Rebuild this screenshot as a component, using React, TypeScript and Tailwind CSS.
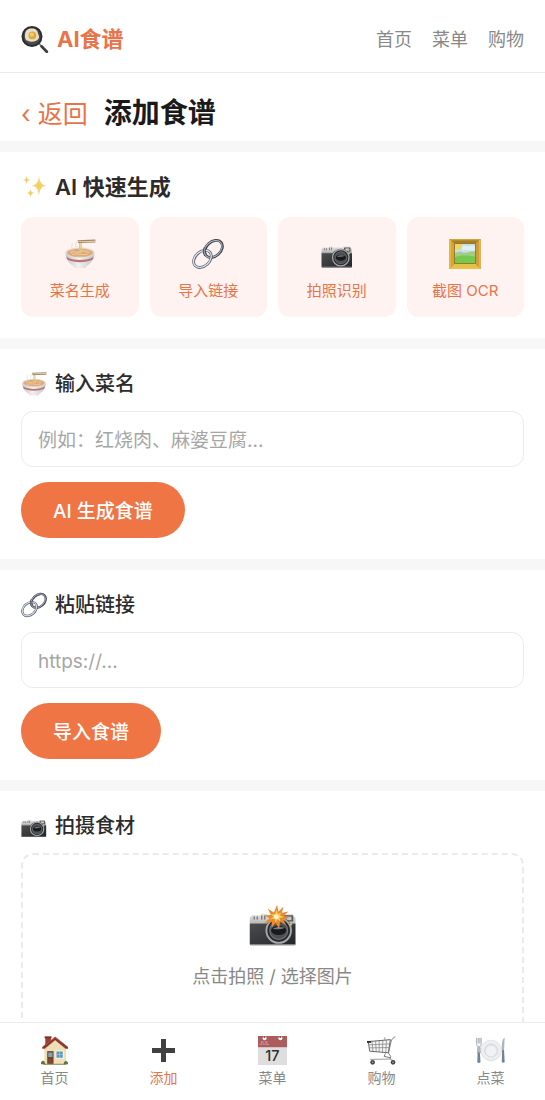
import { useState } from "react";
import type { ReactNode } from "react";

type IconProps = { className?: string };

function PanIcon({ className }: IconProps) {
  return (
    <svg viewBox="0 0 28 28" className={className} aria-hidden="true">
      <path d="M18 18.500l3.200 3.400" stroke="#8a8a8a" strokeWidth="1.800" />
      <path d="M20.600 21.400l5.200 5.400" stroke="#3b3c3f" strokeWidth="2.800" strokeLinecap="round" />
      <circle cx="11" cy="11.500" r="10.500" fill="#2a2c2e" />
      <circle cx="11" cy="11.300" r="8.600" fill="#4a4b4a" />
      <path d="M5.400 5.400c2.200-2.200 7.600-2.600 9.900-.4 1.700 1.500 1.500 3.800 2.500 5.500.9 2-.4 4.400-2.600 5.200-2.600 1-5.600 1.800-8.200 0C3 15.500 3.400 7.600 5.400 5.400z" fill="#e9e0cb" />
      <circle cx="11.400" cy="10.400" r="3.900" fill="#deaa3a" />
      <circle cx="10.800" cy="9.600" r="2.100" fill="#f3cd6a" />
    </svg>
  );
}

function SparklesIcon({ className }: IconProps) {
  return (
    <svg viewBox="0 0 26 26" className={className} aria-hidden="true">
      <defs>
        <radialGradient id="spark">
          <stop offset="0" stopColor="#f3cc50" />
          <stop offset="1" stopColor="#f0e0a8" />
        </radialGradient>
      </defs>
      <g fill="url(#spark)">
        <path d="M18 1.500c.8 6.800 2.200 9 7.500 10-5.300 1-6.700 3.800-7.500 11-.8-7.200-2.200-10-7.500-11 5.300-1 6.700-3.200 7.500-10z" />
        <path d="M5.500 1.500c.4 3 1.200 4 3.800 4.500-2.600.5-3.400 1.600-3.800 4.600-.4-3-1.200-4.100-3.800-4.600 2.600-.5 3.400-1.500 3.800-4.500z" />
        <path d="M9.500 14.500c.4 3 1.300 4.100 4 4.600-2.700.5-3.600 1.700-4 4.700-.4-3-1.300-4.200-4-4.700 2.700-.5 3.600-1.600 4-4.600z" />
      </g>
    </svg>
  );
}

function NoodleIcon({ className }: IconProps) {
  return (
    <svg viewBox="0 0 32 32" className={className} aria-hidden="true">
      <defs>
        <linearGradient id="bowl" x1="0" x2="1">
          <stop offset="0" stopColor="#cbc7c6" />
          <stop offset=".45" stopColor="#f2efed" />
          <stop offset="1" stopColor="#cbc5c5" />
        </linearGradient>
      </defs>
      <path d="M8 10c-1-2 1-3 0-5M12 9c-1-2 1-3 0-5" fill="none" stroke="#e3dfdc" strokeWidth="1" />
      <path d="M1.500 14.500c0 8 5 12 8.500 14v1.500h12v-1.500c3.500-2 8.500-6 8.500-14z" fill="url(#bowl)" />
      <path d="M2.300 18.800c7 4.400 20.400 4.400 27.400 0-.3 1.200-.7 2.100-1.200 3-6.600 3.200-18.400 3.200-25 0-.5-.9-.9-1.800-1.200-3z" fill="#b8757a" />
      <ellipse cx="16" cy="14.500" rx="14.500" ry="5" fill="#dfdad7" />
      <ellipse cx="16" cy="14.800" rx="13" ry="4" fill="#dcaa7c" />
      <path d="M6 14.500c4-3 7 2 10-1s6 1.500 9.500.5M8 16.500c5-2 11 1.500 16-.5" fill="none" stroke="#edca95" strokeWidth="1.100" />
      <path d="M15.500 4c.5 4-.5 6 .8 11M17.200 4v11" fill="none" stroke="#e9c865" strokeWidth="1.200" />
      <path d="M14 2.800L31 2.200M14.500 4.500L31 4" stroke="#a3895c" strokeWidth="1.200" strokeLinecap="round" />
    </svg>
  );
}

function LinkIcon({ className }: IconProps) {
  return (
    <svg viewBox="0 0 32 32" className={className} aria-hidden="true">
      <g fill="none" transform="rotate(-42 16 16)">
        <ellipse cx="23.500" cy="16" rx="10" ry="7.200" stroke="#41454f" strokeWidth="2.800" />
        <ellipse cx="23.200" cy="15.700" rx="10" ry="7.200" stroke="#b5bcc6" strokeWidth="1" />
        <ellipse cx="8.600" cy="16" rx="10" ry="7.200" stroke="#596070" strokeWidth="2.800" />
        <ellipse cx="8.600" cy="15.800" rx="10" ry="7.200" stroke="#dde2e9" strokeWidth="1.300" />
        <path d="M13.500 15.500c0-3 2-5 4.700-6.100" stroke="#41454f" strokeWidth="2.800" />
        <path d="M13.500 15.500c0-3 2-5 4.700-6.100" stroke="#a6adb8" strokeWidth="1" />
      </g>
    </svg>
  );
}

function CameraBody() {
  return (
    <>
      <defs>
        <linearGradient id="cam-top" x2="0" y2="1">
          <stop offset="0" stopColor="#e4e4e2" />
          <stop offset="1" stopColor="#b2b2b0" />
        </linearGradient>
        <linearGradient id="cam-body" x2="1" y2="1">
          <stop offset="0" stopColor="#4b4c4e" />
          <stop offset="1" stopColor="#242527" />
        </linearGradient>
      </defs>
      <path d="M2 1.500h6V.500h4v1h10V.500h7.500v1.500l1.500 1v5H.500V3z" fill="url(#cam-top)" />
      <rect x=".5" y="7" width="30.500" height="14.500" rx=".8" fill="url(#cam-body)" />
      <path d="M.8 7h30M.8 21h30" stroke="#85868a" strokeWidth=".7" />
      <path d="M3.500 2.300v2M5.500 2.300v2M8.500 1.600v2.700M10.500 1.600v2.700" stroke="#777" strokeWidth=".9" />
      <rect x="23" y="1.500" width="6.500" height="4.200" rx=".4" fill="#56585b" />
      <rect x="24.300" y="2.400" width="4" height="2.400" fill="#c6cac8" />
      <circle cx="19.800" cy="11.700" r="9" fill="#3b3c3e" />
      <circle cx="19.800" cy="11.700" r="8.200" fill="#282a2d" stroke="#a4a6a8" strokeWidth="1.300" />
      <circle cx="19.800" cy="11.700" r="6" fill="#4c4f54" stroke="#737679" strokeWidth=".7" />
      <ellipse cx="19.800" cy="11.700" rx="5" ry="3" fill="#17191c" />
      <path d="M15.800 10.500c2-1.300 5.500-1.600 8-.7-2 .9-5 1.500-8 .7z" fill="#777c82" />
      <circle cx="28" cy="7.600" r=".8" fill="#d9c24e" />
    </>
  );
}

function CameraIcon({ className }: IconProps) {
  return (
    <svg viewBox="0 -8 32 32" className={className} aria-hidden="true">
      <CameraBody />
    </svg>
  );
}

function CameraFlashIcon({ className }: IconProps) {
  return (
    <svg viewBox="0 -6 32 28" className={className} aria-hidden="true">
      <CameraBody />
      <path
        d="M18.700-5.500l1 4.700 3.200-3.600-.9 4.200 4.400-.8-3.400 2.800 4.200 1.600-4.400.8 1.900 4-4-2.600-.6 5-2.300-4-2.800 3.300.2-4.100-5.200.9 3.800-3-3.600-2.200 4.400-.2-2-4.200 4 2.500z"
        fill="#e98a2c"
      />
      <path d="M18.500-2.200l.8 3 2.200-1.200-.9 2 2.600 1-2.800.7.6 2.400-2-1.500-1.400 2.300-.4-2.600-3 .3 2.200-1.700-1.600-1.600 2.400.1z" fill="#fbd15b" />
      <circle cx="18.200" cy="2.500" r="1.600" fill="#fff4c9" />
    </svg>
  );
}

function FrameIcon({ className }: IconProps) {
  return (
    <svg viewBox="0 0 32 32" className={className} aria-hidden="true">
      <path d="M.5 1h31v30H.5z" fill="#b78b1e" />
      <path d="M.5 1l5 4.500h21l5-4.500z" fill="#a87d24" />
      <path d="M.5 31l5-5.500h21l5 5.500z" fill="#e6c046" />
      <path d="M.5 1l5 4.500v20L.5 31z" fill="#d5a52f" />
      <path d="M31.500 1l-5 4.500v20l5 5.500z" fill="#cf9f35" />
      <path d="M1.300 1.800h29.400v28.400H1.300z" fill="none" stroke="#e9c653" strokeWidth=".8" />
      <path d="M5.500 5.500h21v20h-21z" fill="#c3dfe8" />
      <path d="M13 8c3-1 5 1 8 0s4 0 5.500.5v4c-4 1-9-1-13.500 0z" fill="#e3eef0" />
      <path d="M5.500 15.500c3-1.500 5-2.500 8-1 4 1.500 8-2.500 13-1v12h-21z" fill="#9fcf85" />
      <path d="M5.500 19.500c6-3 13-2 21-1v7h-21z" fill="#78c850" />
      <path d="M6 6h6.500l.7 2-1 2.200-2.200 1.400L6 11z" fill="#efd657" />
      <path d="M5.500 5.500h21v20h-21z" fill="none" stroke="#8b6a1a" strokeWidth=".8" />
    </svg>
  );
}

function HouseIcon({ className }: IconProps) {
  return (
    <svg viewBox="0 0 84 88" className={className} aria-hidden="true">
      <path d="M14 4h17v26H14z" fill="#9a4038" />
      <path d="M12 1h21v6H12z" fill="#7f322d" />
      <path d="M11 38l33-30 33 30v48H11z" fill="#eedfb8" />
      <path d="M44 14l33 28v-6L44 8 11 36v6z" fill="#c9b184" />
      <path d="M44 2L5 33v6h6l33-27 33 27h6v-6z" fill="#8a332d" />
      <path d="M44 2L5 33v2L44 6l39 29v-2z" fill="#b3594d" />
      <path d="M20 46h19v40H20z" fill="#6c3b26" />
      <path d="M23 50h13v14H23z" fill="#7da3bd" />
      <path d="M23 68h13v14H23z" fill="#81492f" />
      <path d="M45 44h25v25H45z" fill="#faf5e6" />
      <path d="M48 47h19v19H48z" fill="#5e96c2" />
      <path d="M57 47v19M48 56h19" stroke="#c1dbe8" strokeWidth="1.500" />
      <path d="M8 84h70v4H8z" fill="#a69a82" />
      <path d="M1 86c-1-8 3-12 7-11 4 1 6 6 6 11zM70 86c0-7 3-11 7-10 5 1 7 6 6 10z" fill="#5d7a38" />
    </svg>
  );
}

function PlusIcon({ className }: IconProps) {
  return (
    <svg viewBox="0 0 29 29" className={className} aria-hidden="true">
      <path d="M12 3h5v9h9v5h-9v9h-5v-9H3v-5h9z" fill="#414141" />
    </svg>
  );
}

function CalendarIcon({ className }: IconProps) {
  return (
    <svg viewBox="0 0 88 88" className={className} aria-hidden="true">
      <path d="M0 0h88v88H0z" fill="#dedede" />
      <path d="M0 0h88v34H0z" fill="#ad5c5c" />
      <circle cx="20" cy="7" r="6" fill="#fff" />
      <circle cx="68" cy="7" r="6" fill="#fff" />
      <path d="M17 0h5v6h-5zM65 0h5v6h-5z" fill="#8e5050" />
      <text x="4" y="26" fontSize="16" fill="#e2bcbc" fontFamily="Inter, sans-serif">JUL</text>
      <text x="44" y="75" fontSize="44" fontWeight="500" textAnchor="middle" fill="#2f2f2f" fontFamily="Inter, sans-serif">17</text>
    </svg>
  );
}

function CartIcon({ className }: IconProps) {
  return (
    <svg viewBox="0 0 88 88" className={className} aria-hidden="true" fill="none">
      <path d="M4 17l67-6-6 40-57-5z" fill="#f4f4f4" stroke="#666" strokeWidth="3" />
      <path d="M5 27l64-3M6 36l62-1M15 16l3 30M26 15l2 32M37 14v34M48 13l-1 36M59 12l-2 38" stroke="#777" strokeWidth="2" />
      <path d="M86 1L74 12l-9 40 7 10-2 8M56 53l-4 9 20 4" stroke="#777" strokeWidth="3" />
      <path d="M54 4v9M10 71l60-1 12 6" stroke="#999" strokeWidth="3" />
      <path d="M0 15h12v6H0z" fill="#333" />
      <circle cx="17" cy="80" r="7" fill="#444" />
      <circle cx="79" cy="80" r="7" fill="#444" />
      <circle cx="17" cy="80" r="2.500" fill="#aaa" />
      <circle cx="79" cy="80" r="2.500" fill="#aaa" />
    </svg>
  );
}

function PlateIcon({ className }: IconProps) {
  return (
    <svg viewBox="0 0 90 88" className={className} aria-hidden="true">
      <circle cx="47" cy="44" r="33" fill="#dfe1e4" />
      <circle cx="47" cy="43" r="31" fill="#eceef0" />
      <circle cx="47" cy="44" r="20" fill="#e3e5e8" stroke="#cbced2" strokeWidth="2" />
      <circle cx="47" cy="46" r="16" fill="#f1f2f3" />
      <path d="M2 5v18c0 5 2 7 4 8L5 52h8l-1-21c3-1 4-4 4-8V5M7 5v17M12 5v17" fill="none" stroke="#8a98a4" strokeWidth="2.500" />
      <path d="M6 30h6l1 22H5z" fill="#aeb9c2" />
      <path d="M5 50h7l2 30c-2 4-8 4-10 0z" fill="#718496" />
      <path d="M89 4c-7 4-10 18-9 38h7z" fill="#aab6c0" />
      <path d="M81 42h6l2 38c-2 3-7 3-9 0z" fill="#718496" />
    </svg>
  );
}

const topLinks = ["首页", "菜单", "购物"];

const quickActions = [
  { label: "菜名生成", Icon: NoodleIcon },
  { label: "导入链接", Icon: LinkIcon },
  { label: "拍照识别", Icon: CameraIcon },
  { label: "截图 OCR", Icon: FrameIcon },
];

const tabs = [
  { label: "首页", Icon: HouseIcon },
  { label: "添加", Icon: PlusIcon },
  { label: "菜单", Icon: CalendarIcon },
  { label: "购物", Icon: CartIcon },
  { label: "点菜", Icon: PlateIcon },
];

function SectionTitle({ icon, children }: { icon: ReactNode; children: ReactNode }) {
  return (
    <h2 className="flex h-7 items-center gap-2 text-xl leading-7 font-medium text-[#2b2b2b]">
      {icon}
      {children}
    </h2>
  );
}

type FieldSectionProps = {
  id: string;
  title: string;
  icon: ReactNode;
  placeholder: string;
  action: string;
};

function FieldSection({ id, title, icon, placeholder, action }: FieldSectionProps) {
  const [value, setValue] = useState("");

  return (
    <section className="bg-white p-[21px]">
      <SectionTitle icon={icon}>
        <label htmlFor={id}>{title}</label>
      </SectionTitle>
      <input
        id={id}
        type="text"
        value={value}
        onChange={(e) => setValue(e.target.value)}
        placeholder={placeholder}
        className="mt-[13px] block h-14 w-full rounded-xl border border-[#ebebeb] bg-white px-4 pt-0.5 text-[19px] text-[#2b2b2b] outline-none placeholder:text-[#a6a6a6] focus:border-[#ef7545]"
      />
      <button
        type="button"
        className="mt-[15px] block h-14 rounded-full bg-[#ef7545] px-8 pt-1 text-[19px] font-medium text-white"
      >
        {action}
      </button>
    </section>
  );
}

export default function App() {
  return (
    <div
      lang="zh-CN"
      className="flex h-screen flex-col bg-[#f7f7f7] font-['Inter','Noto_Sans_CJK_SC',sans-serif]"
    >
      <header className="flex h-[73px] shrink-0 items-center justify-between border-b border-[#ebebeb] bg-white px-[21px] pt-1.5">
        <a href="#" className="flex items-center gap-2 text-[22px] font-bold text-[#e8744a]">
          <PanIcon className="size-7" />
          AI食谱
        </a>
        <nav className="flex gap-5 pt-0.5 text-lg text-[#888]">
          {topLinks.map((label) => (
            <a key={label} href="#">
              {label}
            </a>
          ))}
        </nav>
      </header>

      <main className="flex min-h-0 flex-1 flex-col gap-[11px] overflow-y-auto [scrollbar-width:none] *:shrink-0">
        <div className="flex h-[68px] items-center bg-white px-[21px] pt-3">
          <div className="flex items-baseline gap-4">
            <a href="#" className="text-[25px] text-[#e8744a]">
              ‹ 返回
            </a>
            <h1 className="text-[28px] font-bold text-[#1a1a1a]">添加食谱</h1>
          </div>
        </div>

        <section className="bg-white p-[21px]">
          <SectionTitle icon={<SparklesIcon className="size-[26px]" />}>
            <span className="text-[22px] font-semibold">AI 快速生成</span>
          </SectionTitle>
          <div className="mt-4 grid grid-cols-4 gap-[11px]">
            {quickActions.map(({ label, Icon }) => (
              <button
                key={label}
                type="button"
                className="flex flex-col items-center gap-[11px] rounded-xl bg-[#fef3f0] pt-[21px] pb-4 text-[15px] leading-5 text-[#e8744a]"
              >
                <Icon className="size-8" />
                {label}
              </button>
            ))}
          </div>
        </section>

        <FieldSection
          id="dish-name"
          title="输入菜名"
          icon={<NoodleIcon className="size-[26px]" />}
          placeholder="例如：红烧肉、麻婆豆腐..."
          action="AI 生成食谱"
        />

        <FieldSection
          id="recipe-url"
          title="粘贴链接"
          icon={<LinkIcon className="size-[26px]" />}
          placeholder="https://..."
          action="导入食谱"
        />

        <section className="bg-white p-[21px]">
          <SectionTitle icon={<CameraIcon className="size-[26px]" />}>拍摄食材</SectionTitle>
          <label
            htmlFor="food-photo"
            className="mt-[13px] flex cursor-pointer flex-col items-center gap-[17px] rounded-xl border-2 border-dashed border-[#ebebeb] py-[49px] text-lg leading-7 text-[#888]"
          >
            <CameraFlashIcon className="h-[42px] w-12" />
            点击拍照 / 选择图片
          </label>
          <input id="food-photo" type="file" accept="image/*" className="hidden" />
        </section>
      </main>

      <nav className="grid h-[78px] shrink-0 grid-cols-5 border-t border-[#ebebeb] bg-white text-sm leading-5 text-[#888]">
        {tabs.map(({ label, Icon }) => (
          <a
            key={label}
            href="#"
            className={`flex flex-col items-center gap-[3px] pt-[13px] ${label === "添加" ? "text-[#e8744a]" : ""}`}
          >
            <Icon className="size-[29px]" />
            {label}
          </a>
        ))}
      </nav>
    </div>
  );
}
